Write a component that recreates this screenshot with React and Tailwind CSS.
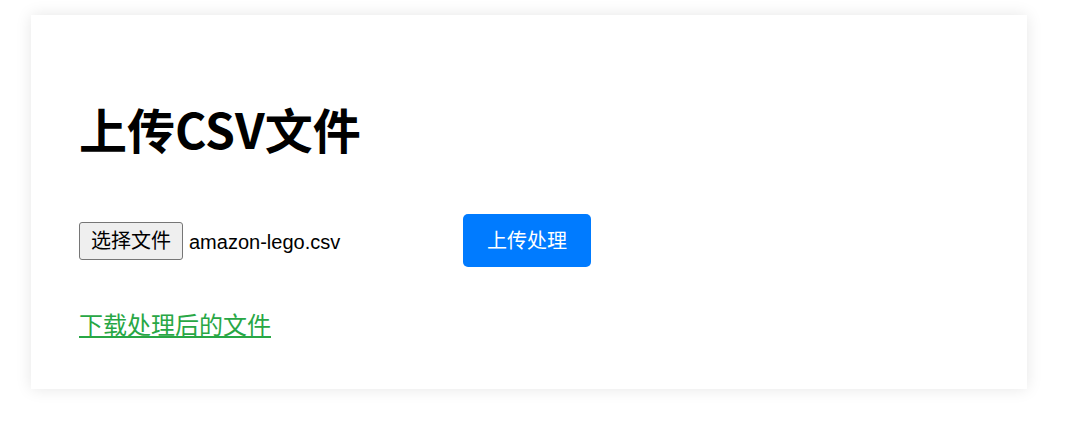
export default function App() {
  return (
    <div className="min-h-[429px] bg-white pt-[15px] pl-[31px]" style={{ fontFamily: '"Liberation Sans", "Noto Sans CJK SC", sans-serif' }}>
      <div className="w-[996px] h-[374px] bg-white shadow-[0_0_15px_rgba(0,0,0,0.1)] px-[48px] pt-[78px]">
        <h1 className="text-[48px] leading-[70px] font-bold text-black" style={{ fontFamily: '"Noto Sans CJK SC", sans-serif' }}>
          上传CSV文件
        </h1>
        <div className="mt-[51px] flex items-center">
          <div className="flex items-center w-[384px]">
            <span className="h-[38px] px-[11px] flex items-center bg-[#efefef] border border-[#767676] rounded-[3px] text-[20px] text-black">
              选择文件
            </span>
            <span className="ml-[6px] mt-[3px] text-[20px] text-black">amazon-lego.csv</span>
          </div>
          <button className="w-[128px] h-[53px] bg-[#007bff] text-white text-[20px] rounded-[5px] flex items-center justify-center">
            上传处理
          </button>
        </div>
        <div className="mt-[44px]">
          <a href="#" className="text-[24px] text-[#28a745] underline leading-[30px]">
            下载处理后的文件
          </a>
        </div>
      </div>
    </div>
  );
}
